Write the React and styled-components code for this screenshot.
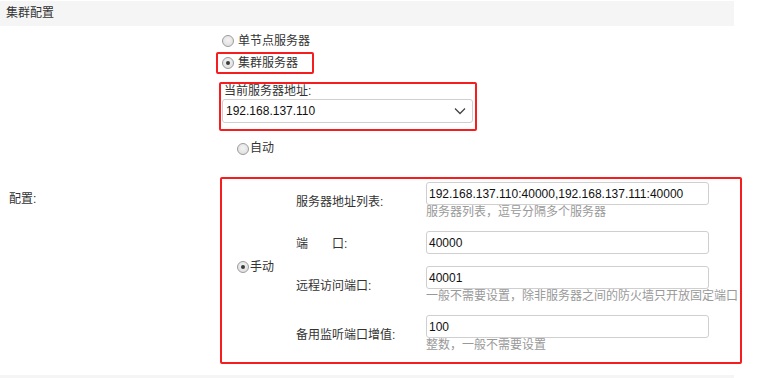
import React from "react";
import styled, { createGlobalStyle } from "styled-components";

const GlobalStyle = createGlobalStyle`
  html, body {
    margin: 0;
    padding: 0;
    background: #fff;
  }
  body {
    font-family: "Liberation Sans", "Noto Sans CJK SC", sans-serif;
    font-size: 12px;
    color: #333;
  }
`;

const Page = styled.div`
  width: 734px;
  padding-top: 1px;
`;

const Header = styled.div`
  height: 25px;
  line-height: 25px;
  padding-left: 6px;
  background: #f5f5f5;
  color: #333;
`;

const Footer = styled.div`
  height: 8px;
  margin-top: 11px;
  background: #f5f5f5;
`;

const Section = styled.div`
  display: flex;
  margin-top: ${(p) => p.$top}px;
`;

const LeftLabel = styled.div`
  width: ${(p) => p.$w}px;
  flex: none;
  padding-left: 9px;
  padding-top: ${(p) => p.$top ?? 0}px;
  box-sizing: border-box;
`;

const Column = styled.div`
  display: flex;
  flex-direction: column;
  align-items: flex-start;
`;

const Radio = styled.span`
  display: inline-block;
  box-sizing: border-box;
  width: 12px;
  height: 12px;
  border-radius: 50%;
  border: 1px solid #9c9c9c;
  background: radial-gradient(circle at 50% 40%, #f4f4f4 0%, #dadada 100%);
  position: relative;
  flex: none;
  &::after {
    content: "";
    display: ${(p) => (p.$checked ? "block" : "none")};
    position: absolute;
    left: 3px;
    top: 3px;
    width: 4px;
    height: 4px;
    border-radius: 50%;
    background: #3a3a3a;
  }
`;

const Option = styled.label`
  display: flex;
  align-items: center;
  gap: ${(p) => p.$gap ?? 4}px;
  line-height: 17px;
  color: #333;
`;

const RedBox = styled.div`
  border: 2px solid ${(p) => (p.$hidden ? "transparent" : "#f51d1d")};
  border-radius: 2px;
  box-sizing: border-box;
`;

const TypeBox = styled(RedBox)`
  width: 98px;
  height: 22px;
  display: flex;
  align-items: center;
  padding-left: 4px;
`;

const AddrBox = styled(RedBox)`
  width: 258px;
  margin-left: 3px;
  margin-top: 8px;
  padding: 1px 2px 6px 1px;
`;

const AddrLabel = styled.div`
  line-height: 13px;
  padding-left: 2px;
`;

const Select = styled.div`
  margin-top: 1px;
  height: 24px;
  box-sizing: border-box;
  border: 1px solid #cfcfcf;
  border-radius: 3px;
  display: flex;
  align-items: center;
  justify-content: space-between;
  padding: 0 6px 0 3px;
  color: #111;
`;

const AutoRow = styled.div`
  padding-left: 17px;
`;

const Input = styled.div`
  width: 283px;
  height: 23px;
  box-sizing: border-box;
  border: 1px solid #cfcfcf;
  border-radius: 3px;
  display: flex;
  align-items: center;
  padding-left: 2px;
  color: #111;
  white-space: nowrap;
`;

const Hint = styled.div`
  color: #999;
  line-height: 14px;
  white-space: nowrap;
`;

const ConfigBox = styled(RedBox)`
  width: 522px;
  margin-top: 20px;
  display: flex;
  align-items: center;
  padding: 3px 0 10px 0;
`;

const ManualCol = styled.div`
  width: 74px;
  flex: none;
  padding-left: 15px;
  box-sizing: border-box;
`;

const Fields = styled.div`
  display: flex;
  flex-direction: column;
  gap: 12px;
`;

const FieldRow = styled.div`
  display: flex;
  align-items: center;
`;

const FieldLabel = styled.div`
  width: 130px;
  flex: none;
  white-space: pre;
`;

const Chevron = () => (
  <svg width="12" height="8" viewBox="0 0 12 8">
    <path d="M1 1.5 L6 6.5 L11 1.5" fill="none" stroke="#444" strokeWidth="1.3" />
  </svg>
);

const fields = [
  {
    label: "服务器地址列表:",
    value: "192.168.137.110:40000,192.168.137.111:40000",
    hint: "服务器列表，逗号分隔多个服务器",
  },
  { label: "端　　口:", value: "40000" },
  {
    label: "远程访问端口:",
    value: "40001",
    hint: "一般不需要设置，除非服务器之间的防火墙只开放固定端口",
  },
  { label: "备用监听端口增值:", value: "100", hint: "整数，一般不需要设置" },
];

export default function App() {
  return (
    <Page>
      <GlobalStyle />
      <Header>集群配置</Header>

      <Section $top={4}>
        <LeftLabel $w={216} />
        <Column>
          <TypeBox $hidden>
            <Option>
              <Radio />
              单节点服务器
            </Option>
          </TypeBox>
          <TypeBox>
            <Option>
              <Radio $checked />
              集群服务器
            </Option>
          </TypeBox>
          <AddrBox>
            <AddrLabel>当前服务器地址:</AddrLabel>
            <Select>
              <span>192.168.137.110</span>
              <Chevron />
            </Select>
          </AddrBox>
        </Column>
      </Section>

      <Section $top={9}>
        <LeftLabel $w={220} $top={49}>配置:</LeftLabel>
        <Column>
          <AutoRow>
            <Option $gap={1}>
              <Radio />
              自动
            </Option>
          </AutoRow>
          <ConfigBox>
            <ManualCol>
              <Option $gap={1}>
                <Radio $checked />
                手动
              </Option>
            </ManualCol>
            <Fields>
              {fields.map((f) => (
                <FieldRow key={f.label}>
                  <FieldLabel>{f.label}</FieldLabel>
                  <div>
                    <Input>{f.value}</Input>
                    {f.hint && <Hint>{f.hint}</Hint>}
                  </div>
                </FieldRow>
              ))}
            </Fields>
          </ConfigBox>
        </Column>
      </Section>
      <Footer />
    </Page>
  );
}
